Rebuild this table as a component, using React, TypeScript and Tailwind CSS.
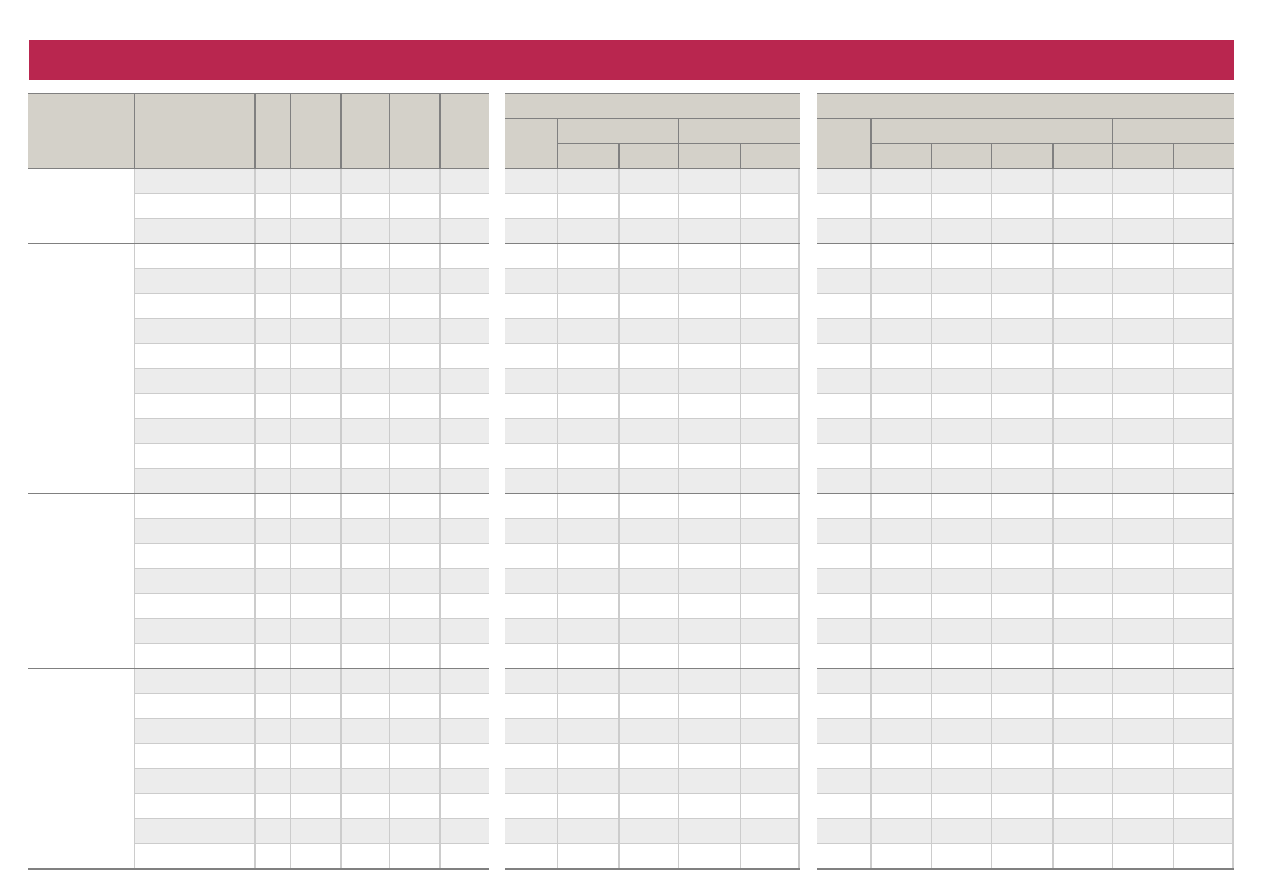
type Col = { w: string; b: string };

const groups = [3, 10, 7, 8];

const t1Cols: Col[] = [
  { w: 'w-[106px]', b: '' },
  { w: 'w-[120px]', b: 'border-l' },
  { w: 'w-[36px]', b: 'border-l-2' },
  { w: 'w-[50px]', b: 'border-l' },
  { w: 'w-[49px]', b: 'border-l-2' },
  { w: 'w-[50px]', b: 'border-l' },
  { w: 'w-[50px]', b: 'border-l-2' },
];

const t2Cols: Col[] = [
  { w: 'w-[52px]', b: '' },
  { w: 'w-[61px]', b: 'border-l' },
  { w: 'w-[60px]', b: 'border-l-2' },
  { w: 'w-[62px]', b: 'border-l' },
  { w: 'w-[60px]', b: 'border-l border-r-2' },
];

const t3Cols: Col[] = [
  { w: 'w-[53px]', b: '' },
  { w: 'w-[61px]', b: 'border-l-2' },
  { w: 'w-[60px]', b: 'border-l' },
  { w: 'w-[61px]', b: 'border-l' },
  { w: 'w-[60px]', b: 'border-l-2' },
  { w: 'w-[61px]', b: 'border-l' },
  { w: 'w-[61px]', b: 'border-l border-r-2' },
];

// global row index where each group begins
const starts = groups.map((_, i) => groups.slice(0, i).reduce((a, b) => a + b, 0));

function Row({ cols, index, last }: { cols: Col[]; index: number; last: boolean }) {
  const bg = index % 2 === 0 ? 'bg-[#ececec]' : 'bg-white';
  return (
    <div className={`flex ${last ? 'h-[24px]' : 'h-[25px] border-b border-[#cccccc]'}`}>
      {cols.map((c, i) => (
        <div key={i} className={`${c.w} ${c.b} ${bg} shrink-0 border-[#cccccc]`} />
      ))}
    </div>
  );
}

function Body({ cols, labelCol }: { cols: Col[]; labelCol?: boolean }) {
  const rowCols = labelCol ? cols.slice(1) : cols;
  return (
    <div>
      {groups.map((n, g) => (
        <div
          key={g}
          className={`flex border-[#808080] ${g === groups.length - 1 ? 'border-b-2' : 'border-b'}`}
        >
          {labelCol && <div className="w-[106px] shrink-0 bg-white" />}
          <div className="flex flex-col">
            {Array.from({ length: n }).map((_, r) => (
              <Row key={r} cols={rowCols} index={starts[g] + r} last={r === n - 1} />
            ))}
          </div>
        </div>
      ))}
    </div>
  );
}

function TableOne() {
  return (
    <div className="w-[461px] shrink-0">
      <div className="flex h-[76px] border-y border-[#808080] bg-[#d4d1c9]">
        {t1Cols.map((c, i) => (
          <div key={i} className={`${c.w} ${c.b} shrink-0 border-[#808080]`} />
        ))}
      </div>
      <Body cols={t1Cols} labelCol />
    </div>
  );
}

function TableTwo() {
  const cell = 'border-b border-[#808080]';
  return (
    <div className="ml-[16px] w-[295px] shrink-0">
      <div className="border-t border-[#808080] bg-[#d4d1c9]">
        <div className="grid grid-cols-[52px_61px_60px_62px_60px] grid-rows-[25px_25px_25px]">
          <div className={`col-span-5 ${cell}`} />
          <div className={`row-span-2 ${cell}`} />
          <div className={`col-span-2 border-l ${cell}`} />
          <div className={`col-span-2 border-l ${cell}`} />
          <div className={`border-l ${cell}`} />
          <div className={`border-l-2 ${cell}`} />
          <div className={`border-l ${cell}`} />
          <div className={`border-l ${cell}`} />
        </div>
      </div>
      <Body cols={t2Cols} />
    </div>
  );
}

function TableThree() {
  const cell = 'border-b border-[#808080]';
  return (
    <div className="ml-[17px] w-[417px] shrink-0">
      <div className="border-t border-[#808080] bg-[#d4d1c9]">
        <div className="grid grid-cols-[53px_61px_60px_61px_60px_61px_61px] grid-rows-[25px_25px_25px]">
          <div className={`col-span-7 ${cell}`} />
          <div className={`row-span-2 ${cell}`} />
          <div className={`col-span-4 border-l-2 ${cell}`} />
          <div className={`col-span-2 border-l ${cell}`} />
          <div className={`border-l-2 ${cell}`} />
          <div className={`border-l ${cell}`} />
          <div className={`border-l ${cell}`} />
          <div className={`border-l-2 ${cell}`} />
          <div className={`border-l ${cell}`} />
          <div className={`border-l ${cell}`} />
        </div>
      </div>
      <Body cols={t3Cols} />
    </div>
  );
}

export default function App() {
  return (
    <div className="min-h-[893px] bg-white pt-[40px] pl-[28px] font-['Liberation_Sans',sans-serif]">
      <div className="ml-px h-[40px] w-[1205px] bg-[#b9264f]" />
      <div className="mt-[13px] flex">
        <TableOne />
        <TableTwo />
        <TableThree />
      </div>
    </div>
  );
}
